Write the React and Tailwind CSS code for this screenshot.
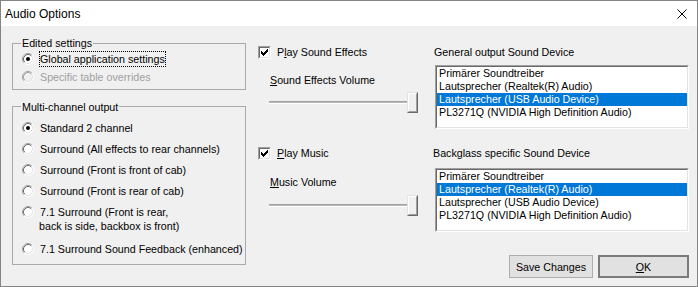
import React from "react";

function Radio({ checked, disabled }) {
  return (
    <svg width="12" height="12" viewBox="0 0 12 12" className="shrink-0">
      <circle cx="6" cy="6" r="5" fill={disabled ? "#f0f0f0" : "#ffffff"} />
      <path d="M2.11 9.89 A5.5 5.5 0 0 1 9.89 2.11" fill="none" stroke="#a0a0a0" strokeWidth="1" />
      <path d="M9.89 2.11 A5.5 5.5 0 0 1 2.11 9.89" fill="none" stroke="#ffffff" strokeWidth="1" />
      <path d="M2.82 9.18 A4.5 4.5 0 0 1 9.18 2.82" fill="none" stroke={disabled ? "#a0a0a0" : "#696969"} strokeWidth="1" />
      <path d="M9.18 2.82 A4.5 4.5 0 0 1 2.82 9.18" fill="none" stroke="#e3e3e3" strokeWidth="1" />
      {checked && <circle cx="6" cy="6" r="2" fill="#000000" />}
    </svg>
  );
}

function Check() {
  const cols = [
    [0, 2],
    [1, 3],
    [2, 4],
    [3, 3],
    [4, 2],
    [5, 1],
    [6, 0],
  ];
  return (
    <div className="w-[13px] h-[13px] shrink-0 border-t border-l border-t-[#a0a0a0] border-l-[#a0a0a0] border-b border-r border-b-white border-r-white">
      <div className="w-full h-full border-t border-l border-t-[#696969] border-l-[#696969] border-b border-r border-b-[#e3e3e3] border-r-[#e3e3e3] bg-white">
        <svg width="9" height="9" viewBox="0 0 9 9" className="block">
          {cols.map(([x, y]) => (
            <rect key={x} x={x + 1} y={y + 1} width="1" height="3" fill="#000" />
          ))}
        </svg>
      </div>
    </div>
  );
}

function Slider() {
  return (
    <div className="flex items-center ml-[11px] h-[21px]">
      <div className="w-[138px] h-[3px] border-t border-t-[#a0a0a0] bg-[#bcbcbc] border-b border-b-white" />
      <div className="w-[11px] h-[21px] border-t border-l border-t-[#e3e3e3] border-l-[#e3e3e3] border-b border-r border-b-[#696969] border-r-[#696969]">
        <div className="w-full h-full border-t border-l border-t-white border-l-white border-b border-r border-b-[#a0a0a0] border-r-[#a0a0a0] bg-[#f0f0f0]" />
      </div>
    </div>
  );
}

function ListBox({ items, sel }) {
  return (
    <div className="ml-[1px] w-[254px] h-[64px] border-t border-l border-t-[#a0a0a0] border-l-[#a0a0a0] border-b border-r border-b-white border-r-white">
      <div className="w-full h-full border-t border-l border-t-[#696969] border-l-[#696969] border-b border-r border-b-[#e3e3e3] border-r-[#e3e3e3] bg-white">
        {items.map((t, i) => (
          <div
            key={t}
            className={
              i === sel
                ? "h-[13px] leading-[13px] pl-[2px] bg-[#0078d7] text-white whitespace-nowrap"
                : "h-[13px] leading-[13px] pl-[2px] whitespace-nowrap"
            }
          >
            {t}
          </div>
        ))}
      </div>
    </div>
  );
}

const DEVICES = [
  "Primärer Soundtreiber",
  "Lautsprecher (Realtek(R) Audio)",
  "Lautsprecher (USB Audio Device)",
  "PL3271Q (NVIDIA High Definition Audio)",
];

export default function App() {
  return (
    <div className="w-[698px] h-[287px] border border-[#858585] bg-[#f0f0f0] flex flex-col text-[10.7px] leading-[14px] text-black font-['Liberation_Sans',Arial,sans-serif] overflow-hidden whitespace-nowrap">
      <div className="h-[25px] bg-white flex items-center pl-[4px] text-[12px]">
        <span>Audio Options</span>
        <div className="flex-1" />
        <svg width="10" height="10" viewBox="0 0 10 10" className="mr-[10px]">
          <path d="M0.5 0.5 L9.5 9.5 M9.5 0.5 L0.5 9.5" stroke="#000" strokeWidth="1" />
        </svg>
      </div>
      <div className="flex flex-1 pl-[11px]">
        {/* left column */}
        <div className="w-[235px] pt-[17px] flex flex-col">
          <div className="border border-[#a9a9a9] pl-[9px] pb-[5px]">
            <div className="-mt-[8px] -ml-[1px] px-[1px] w-fit bg-[#f0f0f0]">Edited settings</div>
            <div className="mt-[2px] flex items-center gap-[6px] h-[14px]">
              <Radio checked />
              <span className="outline outline-1 outline-dotted outline-black">Global application settings</span>
            </div>
            <div className="mt-[4px] flex items-center gap-[6px] h-[14px] text-[#a0a0a0]">
              <Radio disabled />
              <span>Specific table overrides</span>
            </div>
          </div>
          <div className="mt-[16px] border border-[#a9a9a9] pl-[9px] pb-[8px]">
            <div className="-mt-[7px] -ml-[1px] px-[1px] w-fit bg-[#f0f0f0]">Multi-channel output</div>
            <div className="mt-[7px] flex flex-col gap-[7px]">
              <div className="flex items-center gap-[6px] h-[14px]">
                <Radio checked />
                <span>Standard 2 channel</span>
              </div>
              <div className="flex items-center gap-[6px] h-[14px]">
                <Radio />
                <span>Surround (All effects to rear channels)</span>
              </div>
              <div className="flex items-center gap-[6px] h-[14px]">
                <Radio />
                <span>Surround (Front is front of cab)</span>
              </div>
              <div className="flex items-center gap-[6px] h-[14px]">
                <Radio />
                <span>Surround (Front is rear of cab)</span>
              </div>
              <div className="flex items-start gap-[6px]">
                <div className="h-[14px] flex items-center">
                  <Radio />
                </div>
                <span>
                  7.1 Surround (Front is rear,
                  <br />
                  <span className="-ml-[1px]">back is side, backbox is front)</span>
                </span>
              </div>
              <div className="mt-[2px] flex items-center gap-[6px] h-[14px]">
                <Radio />
                <span>7.1 Surround Sound Feedback (enhanced)</span>
              </div>
            </div>
          </div>
        </div>

        {/* right area */}
        <div className="ml-[12px] flex-1 flex flex-col pt-[19px] pr-[8px]">
          <div className="flex">
            <div className="w-[176px] flex flex-col">
              <div className="flex items-center h-[14px]">
                <Check />
                <span className="ml-[6px]">
                  P<u>l</u>ay Sound Effects
                </span>
              </div>
              <div className="mt-[14px] ml-[12px]">
                <u>S</u>ound Effects Volume
              </div>
              <div className="mt-[5px]">
                <Slider />
              </div>
            </div>
            <div className="flex flex-col">
              <div className="h-[14px]">General output Sound Device</div>
              <div className="mt-[6px]">
                <ListBox items={DEVICES} sel={2} />
              </div>
            </div>
          </div>

          <div className="flex mt-[17px]">
            <div className="w-[176px] flex flex-col">
              <div className="flex items-center h-[14px]">
                <Check />
                <span className="ml-[6px]">
                  <u>P</u>lay Music
                </span>
              </div>
              <div className="mt-[15px] ml-[12px]">
                <u>M</u>usic Volume
              </div>
              <div className="mt-[6px]">
                <Slider />
              </div>
            </div>
            <div className="flex flex-col">
              <div className="h-[14px] -ml-[1px]">Backglass specific Sound Device</div>
              <div className="mt-[8px]">
                <ListBox items={DEVICES} sel={1} />
              </div>
            </div>
          </div>

          <div className="flex justify-end gap-[5px] mt-[23px]">
            <div className="w-[84px] h-[23px] bg-[#e1e1e1] border border-[#adadad] flex items-center justify-center">
              Save Changes
            </div>
            <div className="w-[91px] h-[23px] bg-[#e1e1e1] border-2 border-[#7a7a7a] flex items-center justify-center">
              <span>
                <u>O</u>K
              </span>
            </div>
          </div>
        </div>
      </div>
    </div>
  );
}
